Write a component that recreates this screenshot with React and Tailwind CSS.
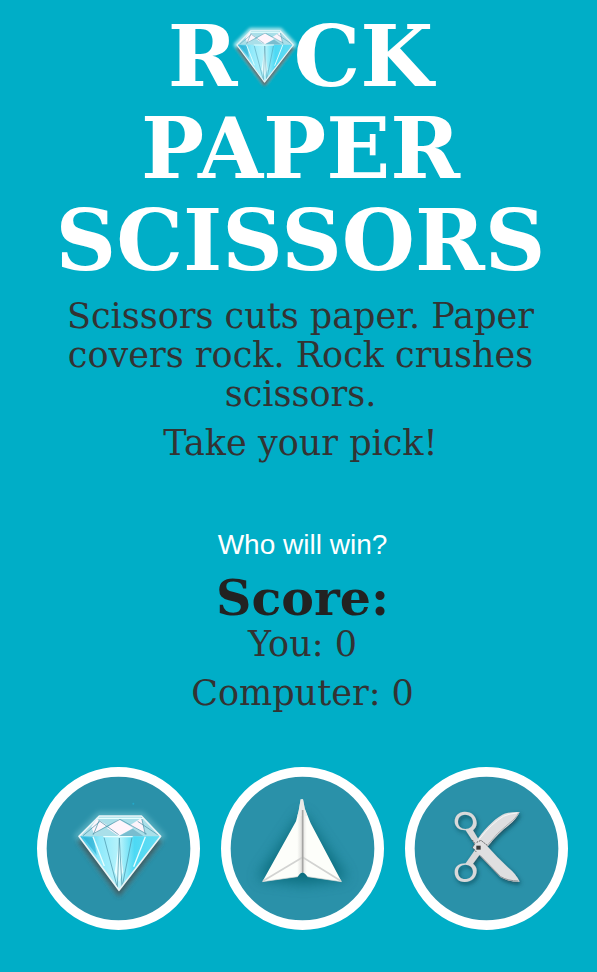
import { useId, useState } from "react";

const MOVES = ["rock", "paper", "scissors"];
const BEATS = { rock: "scissors", paper: "rock", scissors: "paper" };

function GemShape({ glow }) {
  const id = useId();
  const outline = "M208 168H334L392 229L267 391L147 229Z";
  return (
    <g strokeLinejoin="round">
      <defs>
        <filter id={`${id}g`} x="-30%" y="-30%" width="160%" height="160%">
          <feGaussianBlur stdDeviation="8" />
        </filter>
        <linearGradient id={`${id}b`} x1="0" x2="1">
          <stop offset="0" stopColor="#2fb9dc" />
          <stop offset="0.25" stopColor="#8de9fb" />
          <stop offset="0.5" stopColor="#b9f3fb" />
          <stop offset="0.68" stopColor="#4dd9f4" />
          <stop offset="1" stopColor="#66dcf2" />
        </linearGradient>
      </defs>
      <path d={outline} fill="#a5e3ea" stroke="#a5e3ea" strokeWidth="26" opacity={glow} filter={`url(#${id}g)`} />
      <path d="M147 240L267 402L392 240" fill="#333" stroke="#333" strokeWidth="12" opacity="0.65" filter={`url(#${id}g)`} />
      <path d={outline} fill={`url(#${id}b)`} />
      <path d="M208 168H334L392 229H147Z" fill="#a9dfe9" />
      <path d="M200 176L232 196L192 222L184 200Z" fill="#fdf5fb" />
      <path d="M266 178L310 204L266 228L230 204Z" fill="#fff5fc" />
      <path d="M334 174L346 220L300 196Z" fill="#fdf3fa" />
      <path d="M308 206L340 228H268Z" fill="#79bdcf" />
      <path d="M159 232H190L200 285Z" fill="#1da8ce" opacity="0.55" />
      <path d="M267 250L280 335L267 366L254 335Z" fill="#e6fdff" />
      <path
        d="M190 224L208 180M334 170L346 224M159 227L210 184L266 224M270 178L188 222M270 178L350 222M323 184L386 226M222 232L262 382L268 234L276 382L306 232"
        fill="none"
        stroke="#4a93a8"
        strokeWidth="3"
        opacity="0.7"
      />
      <path d="M220 230H308M189 230L223 318M346 230L311 320M200 175H340" fill="none" stroke="#e6ffff" strokeWidth="4" />
      <path d={outline} fill="none" stroke="#e9f5f7" strokeWidth="5" />
    </g>
  );
}

function RockIcon() {
  return (
    <svg viewBox="21 21 489 489" className="block w-full" aria-hidden="true">
      <circle cx="265.5" cy="265.5" r="230" fill="#2a91a9" stroke="#fff" strokeWidth="29" />
      <GemShape glow="0.32" />
      <circle cx="310" cy="131" r="3" fill="#23a9c9" />
    </svg>
  );
}

function PaperIcon() {
  return (
    <svg viewBox="18 21 489 489" className="block w-full" aria-hidden="true">
      <defs>
        <filter id="plane-shadow" x="-40%" y="-40%" width="180%" height="180%">
          <feGaussianBlur stdDeviation="20" />
        </filter>
        <linearGradient id="plane-fold" x1="0" x2="1">
          <stop offset="0" stopColor="#fdfefa" />
          <stop offset="0.44" stopColor="#fdfefa" />
          <stop offset="0.5" stopColor="#dededb" />
          <stop offset="0.56" stopColor="#fdfefa" />
          <stop offset="1" stopColor="#fdfefa" />
        </linearGradient>
      </defs>
      <circle cx="262.5" cy="265.5" r="230" fill="#2a91a9" stroke="#fff" strokeWidth="29" />
      <path d="M262 170L385 350L268 365L140 350Z" fill="#05606e" stroke="#05606e" strokeWidth="14" opacity="0.75" filter="url(#plane-shadow)" />
      <path
        d="M257 118H264L269 145L287 190L380 365L278 350L270 341L263 337L255 341L248 350L142 365L243 184L251 152Z"
        fill="url(#plane-fold)"
      />
      <path d="M257 118H264L270 148L277 168H247L251 152Z" fill="#ededea" opacity="0.7" />
      <path d="M144 363L263 292L378 363" fill="none" stroke="#d2d3d1" strokeWidth="5" />
      <path d="M263 150V337" stroke="#a6a6a4" strokeWidth="5" />
      <path d="M142 365L248 350M278 350L380 365" stroke="#d5d8d5" strokeWidth="2" />
    </svg>
  );
}

function ScissorsIcon() {
  return (
    <svg viewBox="15 21 489 489" className="block w-full" aria-hidden="true">
      <defs>
        <filter id="steel-shadow" x="-20%" y="-20%" width="150%" height="150%">
          <feDropShadow dx="4" dy="7" stdDeviation="6" floodColor="#103c48" floodOpacity="0.75" />
        </filter>
      </defs>
      <circle cx="259.5" cy="265.5" r="230" fill="#2a91a9" stroke="#fff" strokeWidth="29" />
      <g filter="url(#steel-shadow)">
        <path
          fillRule="evenodd"
          d="M194 155C216 155 230 169 230 190C230 199 224 207 219 211L237 241L228 258L197 211C177 211 164 201 164 184C164 168 176 155 194 155ZM195 164C182 164 174 173 174 186C174 198 183 207 196 207C210 207 219 198 219 186C219 173 209 164 195 164Z"
          fill="#d9d9da"
        />
        <path
          fillRule="evenodd"
          d="M194 366C216 366 230 352 230 331C230 322 224 316 219 311L241 281L227 267L197 310C177 310 164 320 164 336C164 354 176 366 194 366ZM195 357C182 357 174 348 174 335C174 323 183 314 196 314C210 314 219 323 219 335C219 348 209 357 195 357Z"
          fill="#d9d9da"
        />
        <path d="M229 244C250 211 279 180 307 164Q325 155 359 156Q350 176 326 196Q296 218 264 258L238 280L218 263Z" fill="#dedee0" />
        <path d="M220 262L239 242L264 261Q291 292 325 323Q348 341 359 365Q327 366 301 351L239 286Z" fill="#dfdfe0" />
        <path d="M262 256Q291 218 325 192Q350 173 356 158" fill="none" stroke="#aeb0b2" strokeWidth="3" />
        <path d="M240 286L302 350Q325 363 355 363" fill="none" stroke="#909598" strokeWidth="3" />
        <path d="M237 238Q275 190 310 169Q330 160 352 159" fill="none" stroke="#f7f7f7" strokeWidth="3" />
      </g>
      <path d="M217 240L225 251L217 263L230 277M230 247L243 241L264 258" fill="none" stroke="#595959" strokeWidth="3" strokeDasharray="5 3" />
      <rect x="229" y="257" width="13" height="12" fill="#3c3c3c" />
    </svg>
  );
}

const ICONS = { rock: RockIcon, paper: PaperIcon, scissors: ScissorsIcon };

export default function App() {
  const [score, setScore] = useState({ you: 0, computer: 0 });
  const [message, setMessage] = useState("Who will win?");

  function play(move) {
    const reply = MOVES[Math.floor(Math.random() * MOVES.length)];
    if (reply === move) {
      setMessage("It's a tie!");
    } else if (BEATS[move] === reply) {
      setMessage("You win!");
      setScore((s) => ({ ...s, you: s.you + 1 }));
    } else {
      setMessage("Computer wins!");
      setScore((s) => ({ ...s, computer: s.computer + 1 }));
    }
  }

  return (
    <main className="min-h-screen bg-[#00aec7] pt-[11px] pr-6 pb-10 pl-8 text-center font-['DejaVu_Serif',serif] text-[35px] leading-[39px] text-[#333]">
      <header className="pr-1">
        <h1 className="text-[84px] leading-[92px] font-bold text-white">
          R
          <svg viewBox="130 134 278 270" className="-mx-1 inline-block h-16 w-16 overflow-visible align-baseline" role="img" aria-label="O">
            <GemShape glow="1" />
          </svg>
          CK
          <br />
          PAPER SCISSORS
        </h1>
        <div className="mt-[10px] px-5">
          <p>Scissors cuts paper. Paper covers rock. Rock crushes scissors.</p>
          <p className="mt-[10px]">Take your pick!</p>
        </div>
      </header>
      <p className="mt-[63px] font-['Liberation_Sans',sans-serif] text-[28px] leading-[38px] text-white" aria-live="polite">
        {message}
      </p>
      <section>
        <h2 className="mt-[7px] text-[49px] leading-[54px] font-bold text-[#222]">Score:</h2>
        <p>You: {score.you}</p>
        <p className="mt-[10px]">Computer: {score.computer}</p>
      </section>
      <div className="mt-[54px] flex justify-center gap-[21px]">
        {MOVES.map((move) => {
          const Icon = ICONS[move];
          return (
            <button
              key={move}
              type="button"
              aria-label={move}
              onClick={() => play(move)}
              className="w-[163px] cursor-pointer rounded-full"
            >
              <Icon />
            </button>
          );
        })}
      </div>
    </main>
  );
}
